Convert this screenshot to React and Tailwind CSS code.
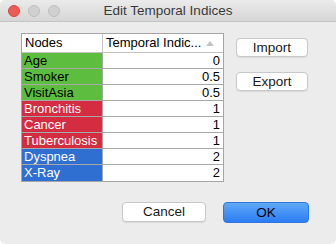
const rows = [
  { name: "Age", value: "0", tone: "green" },
  { name: "Smoker", value: "0.5", tone: "green" },
  { name: "VisitAsia", value: "0.5", tone: "green" },
  { name: "Bronchitis", value: "1", tone: "red" },
  { name: "Cancer", value: "1", tone: "red" },
  { name: "Tuberculosis", value: "1", tone: "red" },
  { name: "Dyspnea", value: "2", tone: "blue" },
  { name: "X-Ray", value: "2", tone: "blue" },
];

const toneClass = {
  green: "bg-[#5cbd3e] text-black",
  red: "bg-[#d42c40] text-white",
  blue: "bg-[#2f6fd2] text-white",
};

const SideButton = ({ children }) => (
  <button className="w-[72px] h-[19px] rounded-[4px] bg-white border border-[#c8c8c8] shadow-[0_1px_1px_rgba(0,0,0,0.08)] text-[13.5px] leading-none text-[#1a1a1a] flex items-center justify-center">
    {children}
  </button>
);

export default function App() {
  return (
    <div
      className="w-[336px] h-[244px] bg-white"
      style={{ fontFamily: '"Liberation Sans", Arial, sans-serif' }}
    >
      <div className="w-full h-full rounded-[5px] overflow-hidden bg-[#ececec] flex flex-col">
        {/* Title bar */}
        <div className="h-[22px] shrink-0 grid grid-cols-[1fr_auto_1fr] items-center bg-gradient-to-b from-[#ebebeb] to-[#d6d6d6] border-b border-[#c4c4c4]">
          <div className="flex items-center gap-[8px] pl-[8px]">
            <span className="w-[12px] h-[12px] rounded-full bg-[#ee5d55] border border-[#d7473f]" />
            <span className="w-[12px] h-[12px] rounded-full bg-[#d0d0d0] border border-[#bdbdbd]" />
            <span className="w-[12px] h-[12px] rounded-full bg-[#d0d0d0] border border-[#bdbdbd]" />
          </div>
          <div className="text-[13.5px] text-[#3a3a3a] leading-none">Edit Temporal Indices</div>
          <div />
        </div>

        {/* Body */}
        <div className="flex pl-[21px] pt-[11px]">
          <div className="w-[203px] border border-[#a5a5a5] bg-white">
            <div className="flex h-[19px] border-b border-[#c2c2c2] text-[13px] text-black">
              <div className="w-[81px] pl-[3px] flex items-center border-r border-[#c8c8c8]">Nodes</div>
              <div className="flex-1 pl-[3px] pr-[9px] flex items-center justify-between">
                <span>Temporal Indic...</span>
                <svg width="8" height="5" viewBox="0 0 8 5">
                  <path d="M0 5 L4 0 L8 5 Z" fill="#c4c4c4" />
                </svg>
              </div>
            </div>
            {rows.map((r) => (
              <div key={r.name} className="flex h-[16px] border-b border-[#a8a8a8] text-[13px] last:border-b-0">
                <div className={`w-[81px] pl-[2px] flex items-center border-r border-[#a8a8a8] ${toneClass[r.tone]}`}>
                  {r.name}
                </div>
                <div className="flex-1 pr-[3px] flex items-center justify-end text-black">{r.value}</div>
              </div>
            ))}
          </div>

          <div className="ml-[12px] pt-[5px] flex flex-col gap-[15px]">
            <SideButton>Import</SideButton>
            <SideButton>Export</SideButton>
          </div>
        </div>

        {/* Footer */}
        <div className="flex justify-end gap-[17px] pr-[27px] mt-[20px]">
          <button className="w-[84px] h-[20px] rounded-[4px] bg-white border border-[#c8c8c8] shadow-[0_1px_1px_rgba(0,0,0,0.08)] text-[13.5px] leading-none text-[#1a1a1a] flex items-center justify-center">
            Cancel
          </button>
          <button className="w-[86px] h-[21px] rounded-[4px] bg-gradient-to-b from-[#5fa8fa] to-[#2b7cf2] border border-[#2f76de] text-[13.5px] leading-none text-black flex items-center justify-center">
            OK
          </button>
        </div>
      </div>
    </div>
  );
}
